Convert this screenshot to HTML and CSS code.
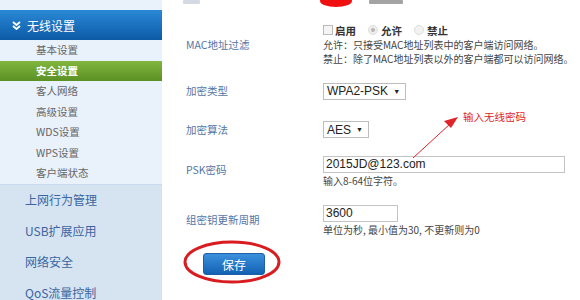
FILE: index.html
```html
<!DOCTYPE html>
<html lang="zh-CN">
<head>
  <meta charset="UTF-8" />
  <title>无线安全设置</title>
  <link rel="stylesheet" href="styles.css">
</head>
<body>

<div class="page">
  <div class="sidebar">
    <div class="side-top"></div>
    <div class="side-head">
      <svg class="chev" width="9" height="9" viewBox="0 0 9 9"><path d="M1 1 L4.5 4 L8 1 M1 5 L4.5 8 L8 5" fill="none" stroke="#fff" stroke-width="1.8"/></svg>
      无线设置
    </div>
    <ul class="submenu">
      <li>基本设置</li>
      <li class="active">安全设置</li>
      <li>客人网络</li>
      <li>高级设置</li>
      <li>WDS设置</li>
      <li>WPS设置</li>
      <li>客户端状态</li>
    </ul>
    <ul class="mainmenu">
      <li>上网行为管理</li>
      <li>USB扩展应用</li>
      <li>网络安全</li>
      <li>QoS流量控制</li>
    </ul>
  </div>

  <div class="content">
    <!-- row cut off by the top edge -->
    <div class="cut-row">
      <span class="frag frag-label"></span>
      <span class="frag frag-value"></span>
    </div>

    <div class="row row-mac">
      <div class="label">MAC地址过滤</div>
      <div class="field">
        <div class="opts">
          <span class="box"></span><b>启用</b>
          <span class="radio on"></span><b>允许</b>
          <span class="radio"></span><b>禁止</b>
        </div>
        <div class="note">允许：只接受MAC地址列表中的客户端访问网络。</div>
        <div class="note">禁止：除了MAC地址列表以外的客户端都可以访问网络。</div>
      </div>
    </div>

    <div class="row row-type">
      <div class="label">加密类型</div>
      <div class="field"><span class="select wide">WPA2-PSK <i>▼</i></span></div>
    </div>

    <div class="row row-algo">
      <div class="label">加密算法</div>
      <div class="field"><span class="select">AES <i>▼</i></span></div>
    </div>

    <div class="row row-psk">
      <div class="label">PSK密码</div>
      <div class="field">
        <div class="input long">2015JD@123.com</div>
        <div class="hint">输入8-64位字符。</div>
      </div>
    </div>

    <div class="row row-key">
      <div class="label">组密钥更新周期</div>
      <div class="field">
        <div class="input short">3600</div>
        <div class="hint">单位为秒, 最小值为30, 不更新则为0</div>
      </div>
    </div>

    <div class="actions">
      <button class="save-btn">保存</button>
    </div>

    <!-- annotations drawn over the screenshot -->
    <span class="scribble"></span>
    <svg class="arrow" width="70" height="50" viewBox="0 0 70 50">
      <line x1="2" y1="46" x2="39" y2="12" stroke="#e0242a" stroke-width="1"/>
      <path d="M47 5 L33 9 L40 16 Z" fill="#e0242a"/>
    </svg>
    <span class="arrow-text">输入无线密码</span>
    <svg class="ring" width="100" height="46" viewBox="0 0 100 46">
      <ellipse cx="50" cy="22" rx="47" ry="20" fill="none" stroke="#d81c20" stroke-width="3"/>
    </svg>
  </div>
</div>

</body>
</html>
```

FILE: styles.css
```css
body {
  margin: 0;
  font-family: "Noto Sans CJK SC", "Liberation Sans", sans-serif;
  font-size: 11px;
  background: #fff;
  overflow: hidden;
}
ul {
  list-style: none;
  margin: 0;
  padding: 0;
}
.page {
  display: flex;
  height: 300px;
}

/* sidebar */
.sidebar {
  width: 162px;
  flex-shrink: 0;
  background: #d6e4f1;
}
.side-top {
  height: 10px;
  background: #e9f1fa;
}
.side-head {
  height: 30px;
  display: flex;
  align-items: center;
  gap: 6px;
  padding-left: 12px;
  color: #fff;
  font-size: 12px;
  background: linear-gradient(#2a89d6, #0c5aa6);
}
.chev {
  margin-top: 1px;
}
.submenu {
  background: #e9f1fa;
  border-bottom: 1px solid #c9dbec;
}
.submenu li {
  height: 20.5px;
  line-height: 20.5px;
  padding-left: 36px;
  color: #666;
  font-size: 10.5px;
}
.submenu li.active {
  color: #fff;
  font-weight: bold;
  background: linear-gradient(#82b63f, #5b9024);
}
.mainmenu li {
  height: 31px;
  line-height: 31px;
  padding-left: 25px;
  color: #3a65a0;
  font-size: 12px;
}
.mainmenu li:first-child {
  height: 30px;
  line-height: 30px;
}

/* content */
.content {
  flex: 1;
  position: relative;
  padding-left: 24px;
}
.cut-row {
  height: 8px;
  position: relative;
}
.frag {
  display: inline-block;
  vertical-align: top;
  height: 4px;
  border-radius: 1px;
}
.frag-label {
  width: 17px;
  margin-left: -3px;
  background: #d4dae4;
}
.frag-value {
  width: 34px;
  margin-left: 167px;
  background: #666;
  opacity: 0.6;
}
.row {
  display: flex;
  align-items: center;
}
.label {
  width: 137px;
  flex-shrink: 0;
  color: #5575a6;
  font-size: 10.5px;
}
.field {
  color: #444;
}
.row-mac {
  margin-top: 14px;
}
.opts {
  display: flex;
  align-items: center;
  height: 16px;
  color: #333;
}
.opts b {
  font-size: 10.5px;
  margin-right: 12px;
}
.box {
  width: 8px;
  height: 8px;
  border: 1px solid #bbb;
  background: #f4f4f4;
  margin-right: 2px;
}
.radio {
  width: 8px;
  height: 8px;
  border-radius: 50%;
  border: 1px solid #ddd;
  background: #f2f2f2;
  margin-right: 3px;
}
.radio.on {
  background: radial-gradient(#bbb 30%, #eee 40%);
}
.note {
  line-height: 14px;
  font-size: 10px;
  white-space: nowrap;
  color: #444;
}
.select {
  display: inline-flex;
  align-items: center;
  gap: 5px;
  height: 15px;
  padding: 0 5px 0 3px;
  border: 1px solid #bdbdbd;
  font-family: "Liberation Sans", sans-serif;
  font-size: 12px;
  color: #222;
}
.select i {
  font-style: normal;
  font-size: 7px;
}
.row-type {
  margin-top: 16px;
}
.row-algo {
  margin-top: 21px;
}
.row-psk {
  margin-top: 18px;
}
.row-key {
  margin-top: 16px;
}
.input {
  height: 15px;
  line-height: 15px;
  padding-left: 2px;
  border: 1px solid #c4c4c4;
  font-family: "Liberation Sans", sans-serif;
  font-size: 12px;
  color: #222;
}
.input.long {
  width: 238px;
}
.input.short {
  width: 71px;
}
.hint {
  font-size: 10px;
  line-height: 16px;
  white-space: nowrap;
  color: #444;
}
.row-psk .label {
  margin-top: -6px;
}
.row-key .label {
  margin-top: -4px;
}
.actions {
  margin-top: 15px;
  padding-left: 17px;
}
.save-btn {
  width: 62px;
  height: 22px;
  border: 1px solid #1f5fa8;
  border-radius: 3px;
  background: linear-gradient(#3b90dc, #1262b4);
  color: #fff;
  font-family: "Noto Sans CJK SC", sans-serif;
  font-size: 12px;
  padding: 0;
}

/* annotations */
.scribble {
  position: absolute;
  left: 158px;
  top: -5px;
  width: 32px;
  height: 12px;
  border-radius: 50%;
  background: #f01010;
}
.arrow {
  position: absolute;
  left: 249px;
  top: 112px;
}
.arrow-text {
  position: absolute;
  left: 301px;
  top: 109px;
  color: #e0242a;
  font-size: 10.5px;
}
.ring {
  position: absolute;
  left: 20px;
  top: 240px;
}
```
